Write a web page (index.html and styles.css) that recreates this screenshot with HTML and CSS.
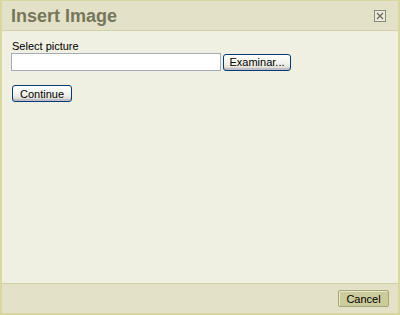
FILE: index.html
```html
<!DOCTYPE html>
<html>
<head>
<meta charset="utf-8">
<link rel="stylesheet" href="styles.css">
</head>
<body>
<div class="dialog">
  <div class="header">
    <div class="title">Insert Image</div>
    <div class="close"><svg width="12" height="12" viewBox="0 0 12 12"><rect x="0.5" y="0.5" width="11" height="11" fill="#ecebdc" stroke="#8a8a78"/><path d="M3 3 L9 9 M9 3 L3 9" stroke="#6a6a5a" stroke-width="1.3"/></svg></div>
  </div>
  <div class="body">
    <div class="label">Select picture</div>
    <div class="filerow">
      <div class="input"></div>
      <div class="btn xp">Examinar...</div>
    </div>
    <div class="btn xp cont">Continue</div>
  </div>
  <div class="footer">
    <div class="btn cancel">Cancel</div>
  </div>
</div>
</body>
</html>
```
FILE: styles.css
```css
html, body { margin: 0; padding: 0; }
body { width: 400px; height: 315px; background: #d9d8a6; font-family: "Liberation Sans", sans-serif; }
.dialog {
  box-sizing: border-box;
  width: 400px; height: 315px;
  border: 2px solid #d8d7a0;
  border-top-width: 1px;
  display: flex; flex-direction: column;
  background: #efefe2;
}
.header {
  height: 29px;
  background: #e3e2c8;
  border-bottom: 1px solid #d2d1a6;
  display: flex; align-items: center; justify-content: space-between;
  padding: 0 12px 0 9px;
}
.title { font-family: "Liberation Sans", sans-serif; font-weight: bold; font-size: 18px; color: #76765a; padding-top: 1px; }
.close { width: 12px; height: 12px; display: flex; }
.body { flex: 1; padding: 9px 9px 0 9px; font-size: 11px; color: #000; }
.label { font-family: "Liberation Sans", sans-serif; font-size: 11px; height: 12px; line-height: 12px; margin-left: 1px; }
.filerow { display: flex; align-items: center; margin-top: 1px; gap: 2px; }
.input { width: 208px; height: 16px; border: 1px solid #a5acb5; background: #fff; }
.btn {
  font-family: "Liberation Sans", sans-serif; font-size: 11px;
  display: flex; align-items: center; justify-content: center;
  box-sizing: border-box;
}
.xp {
  height: 17px;
  border: 1px solid #003c74;
  border-radius: 3px;
  background: linear-gradient(#ffffff, #f0f0ea 60%, #d6d0c5);
  box-shadow: inset 0 -2px 0 #c0bec8;
}
.filerow .xp { width: 68px; }
.cont { width: 60px; margin-top: 14px; margin-left: 1px; }
.footer {
  height: 29px;
  background: #e3e2c8;
  border-top: 1px solid #d2d1a6;
  display: flex; align-items: center; justify-content: flex-end;
  padding-right: 9px;
}
.cancel {
  width: 51px; height: 17px;
  background: #cccb9b;
  border: 1px solid #a8a77a;
  border-radius: 2px;
  box-shadow: inset 1px 1px 0 #e8e7c8;
}
```
